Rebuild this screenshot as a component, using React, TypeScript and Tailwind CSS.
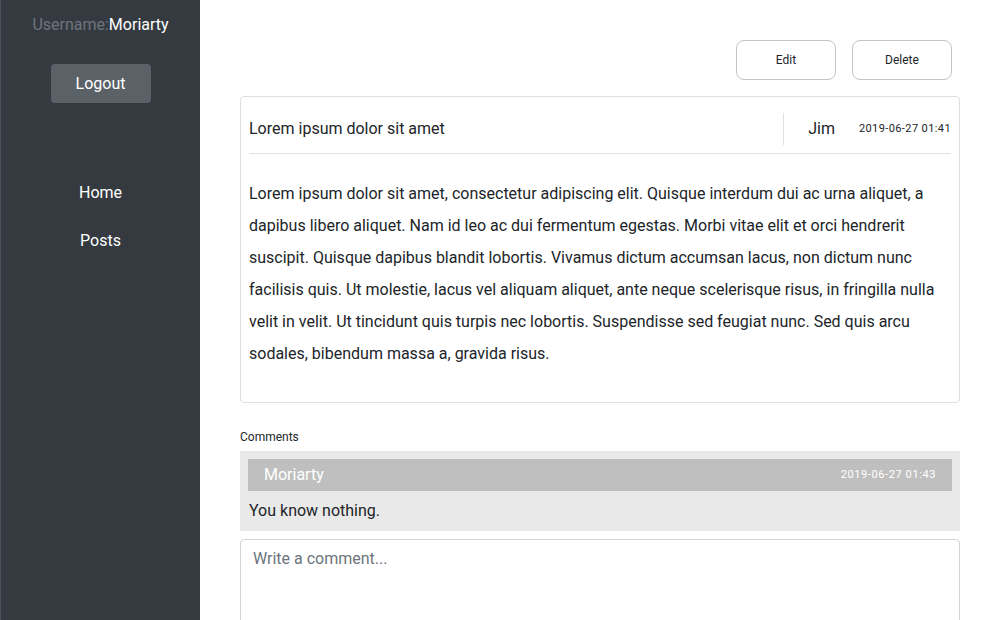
const body =
  "Lorem ipsum dolor sit amet, consectetur adipiscing elit. Quisque interdum dui ac urna aliquet, a dapibus libero aliquet. Nam id leo ac dui fermentum egestas. Morbi vitae elit et orci hendrerit suscipit. Quisque dapibus blandit lobortis. Vivamus dictum accumsan lacus, non dictum nunc facilisis quis. Ut molestie, lacus vel aliquam aliquet, ante neque scelerisque risus, in fringilla nulla velit in velit. Ut tincidunt quis turpis nec lobortis. Suspendisse sed feugiat nunc. Sed quis arcu sodales, bibendum massa a, gravida risus.";

const Sidebar = () => (
  <aside className="w-[200px] shrink-0 bg-[#343a40] border-l border-[#4a5057] flex flex-col items-center">
    <div className="mt-[13px] text-base leading-6">
      <span className="text-[#6c757d]">Username:</span>
      <span className="text-white">Moriarty</span>
    </div>
    <button className="mt-[27px] w-[100px] h-[39px] rounded bg-[#5a6268] text-white text-base">
      Logout
    </button>
    <nav className="mt-[78px] flex flex-col items-center gap-6 text-white text-base leading-6">
      <a>Home</a>
      <a>Posts</a>
    </nav>
  </aside>
);

export default function App() {
  return (
    <div
      className="flex h-[620px] overflow-hidden bg-white text-[#212529]"
      style={{ fontFamily: "Roboto, 'Noto Sans', sans-serif" }}
    >
      <Sidebar />
      <main className="flex-1 px-10 pt-10">
        <div className="flex justify-end gap-4 pr-2">
          <button className="w-[100px] h-[40px] rounded-lg border border-[#c4c4c4] text-xs">
            Edit
          </button>
          <button className="w-[100px] h-[40px] rounded-lg border border-[#c4c4c4] text-xs">
            Delete
          </button>
        </div>

        {/* Post */}
        <div className="mt-4 border border-[#dfdfdf] rounded px-2 pb-[32px]">
          <div className="flex items-center h-8 mt-4 mb-2">
            <div className="flex-1 text-base">Lorem ipsum dolor sit amet</div>
            <div className="h-[32px] border-l border-[#dee2e6] pl-6 flex items-center">
              <span className="text-base">Jim</span>
              <span className="ml-6 text-[11px] tracking-[0.4px]">2019-06-27 01:41</span>
            </div>
          </div>
          <div className="border-b border-[#dee2e6]" />
          <p className="mt-6 text-base leading-8">{body}</p>
        </div>

        {/* Comments */}
        <div className="mt-[26px] text-xs">Comments</div>
        <div className="mt-[6px] bg-[#e9e9e9] px-2 pt-2">
          <div className="h-8 bg-[#bfbfbf] flex items-center justify-between px-4 text-white">
            <span className="text-base">Moriarty</span>
            <span className="text-[11px] tracking-[0.6px]">2019-06-27 01:43</span>
          </div>
          <div className="mt-[8px] text-base leading-[24px] pl-[1px] pb-[8px]">
            You know nothing.
          </div>
        </div>
        <textarea
          placeholder="Write a comment..."
          className="mt-[8px] w-full h-[120px] border border-[#ced4da] rounded px-3 py-[7px] text-base placeholder:text-[#6c757d] resize-none outline-none"
        />
      </main>
    </div>
  );
}
